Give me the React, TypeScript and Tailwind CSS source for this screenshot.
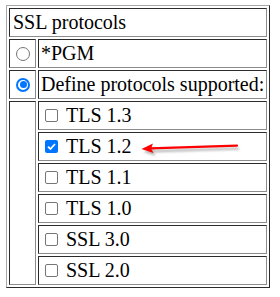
import React from "react";

const protocols = [
  { label: "TLS 1.3", checked: false },
  { label: "TLS 1.2", checked: true },
  { label: "TLS 1.1", checked: false },
  { label: "TLS 1.0", checked: false },
  { label: "SSL 3.0", checked: false },
  { label: "SSL 2.0", checked: false },
];

// inset cell border like an old border=1 table
const cell =
  "h-[29px] border border-t-[#2b2b2b] border-l-[#2b2b2b] border-b-[#8c8c8c] border-r-[#8c8c8c] px-[2px] py-0 align-middle";

function Radio({ checked }: { checked?: boolean }) {
  if (checked) {
    return (
      <span className="flex h-[14px] w-[14px] items-center justify-center rounded-full border-[2px] border-[#0075ff] bg-white">
        <span className="h-[7px] w-[7px] rounded-full bg-[#0075ff]" />
      </span>
    );
  }
  return <span className="block h-[14px] w-[14px] rounded-full border border-[#767676] bg-white" />;
}

function Checkbox({ checked }: { checked?: boolean }) {
  if (checked) {
    return (
      <span className="flex h-[13px] w-[13px] items-center justify-center rounded-[2px] bg-[#0075ff]">
        <svg width="11" height="11" viewBox="0 0 11 11">
          <path d="M2 5.6 L4.4 8 L9 3" fill="none" stroke="white" strokeWidth="1.8" />
        </svg>
      </span>
    );
  }
  return <span className="block h-[13px] w-[13px] rounded-[2px] border border-[#767676] bg-white" />;
}

export default function App() {
  return (
    <div className="relative h-[297px] w-[280px] bg-white pl-[6px] pt-[5px] text-[20px] leading-[23px] text-black [font-family:'Liberation_Serif','Times_New_Roman',serif]">
      <table className="w-[264px] table-fixed border-separate border-spacing-[2px] border border-t-[#a8a8a8] border-l-[#a8a8a8] border-b-[#2b2b2b] border-r-[#2b2b2b]">
        <colgroup>
          <col className="w-[27px]" />
          <col />
        </colgroup>
        <tbody>
          <tr>
            <td colSpan={2} className={cell}>
              <span className="pl-[1px]">SSL protocols</span>
            </td>
          </tr>
          <tr>
            <td className={cell}>
              <div className="flex justify-center pl-[1px]">
                <Radio />
              </div>
            </td>
            <td className={cell}>*PGM</td>
          </tr>
          <tr>
            <td className={cell}>
              <div className="flex justify-center pl-[1px]">
                <Radio checked />
              </div>
            </td>
            <td className={`${cell} whitespace-nowrap`}>Define protocols supported:</td>
          </tr>
          {protocols.map((p, i) => (
            <tr key={p.label}>
              {i === 0 && <td rowSpan={protocols.length} className={`${cell} h-auto`} />}
              <td className={cell}>
                <div className="flex items-center">
                  <span className="ml-[4px] mr-[8px]">
                    <Checkbox checked={p.checked} />
                  </span>
                  <span className="[font-family:'Liberation_Serif','Times_New_Roman',serif]">{p.label}</span>
                </div>
              </td>
            </tr>
          ))}
        </tbody>
      </table>

      {/* red annotation arrow pointing at TLS 1.2 */}
      <svg className="pointer-events-none absolute left-0 top-0" width="280" height="297" viewBox="0 0 280 297">
        <defs>
          <filter id="sh" x="-20%" y="-100%" width="140%" height="300%">
            <feGaussianBlur stdDeviation="1.2" />
          </filter>
        </defs>
        <g filter="url(#sh)" opacity="0.45" transform="translate(2 3)">
          <path d="M150 148.2 L237 145.6" stroke="#666" strokeWidth="2.4" fill="none" />
          <path d="M141.5 149 L153 143.5 L151 148.6 L153.5 153 Z" fill="#666" />
        </g>
        <path d="M150 148.4 L237 145.6" stroke="#ff0000" strokeWidth="2.2" fill="none" strokeLinecap="round" />
        <path d="M141.5 149 L153 143.5 L151 148.6 L153.5 153 Z" fill="#ff0000" />
      </svg>
    </div>
  );
}
